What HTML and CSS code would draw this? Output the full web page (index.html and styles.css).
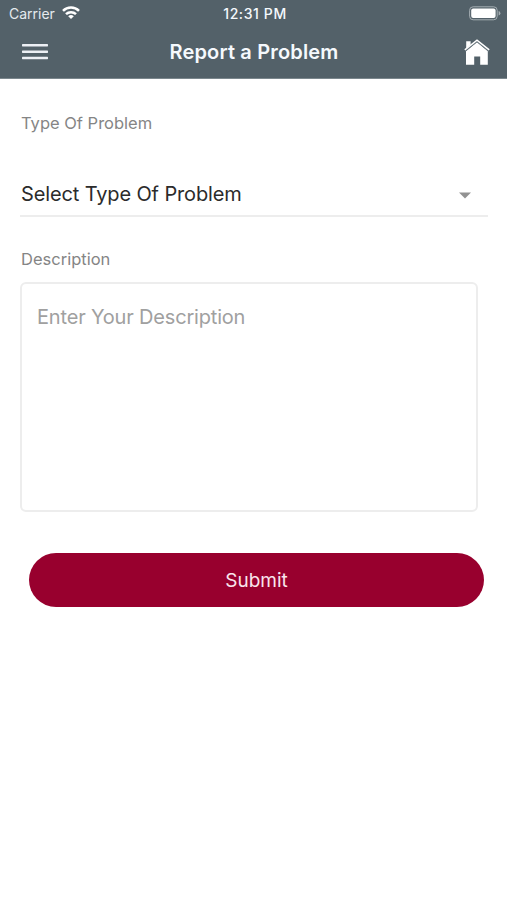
FILE: index.html
```html
<!DOCTYPE html>
<html lang="en">
<head>
<meta charset="utf-8">
<title>Report a Problem</title>
<link rel="stylesheet" href="styles.css">
</head>
<body>
<header class="header">
  <div class="status">
    <div class="carrier"><span class="carrier-name">Carrier</span>
      <svg class="wifi" width="18" height="13" viewBox="0 0 18 13" fill="none" stroke="#fff" stroke-width="2.5"><path d="M1 4.8a11.3 11.3 0 0 1 16 0M4 8.2a7.1 7.1 0 0 1 10 0"/><path d="M9 13 6.2 10.3a4 4 0 0 1 5.6 0Z" fill="#fff" stroke="none"/></svg>
    </div>
    <span class="time">12:31 PM</span>
    <svg class="battery" width="32" height="15" viewBox="0 0 32 15"><rect x=".6" y=".8" width="27.6" height="13" rx="3.5" fill="none" stroke="#a4adb2"/><rect x="2.2" y="2.6" width="24.4" height="9.5" rx="2" fill="#fff"/><path d="M29.6 5v4.5q1.8-.6 1.8-2.25T29.6 5Z" fill="#a4adb2"/></svg>
  </div>
  <div class="navbar">
    <button class="icon-button" aria-label="Menu"><svg width="26" height="18" viewBox="0 0 26 18" fill="#edf0f5"><rect y="1" width="26" height="2.4" rx=".6"/><rect y="7.5" width="26" height="2.4" rx=".6"/><rect y="13.8" width="26" height="2.4" rx=".6"/></svg></button>
    <h1 class="title">Report a Problem</h1>
    <button class="icon-button home" aria-label="Home"><svg width="26" height="27" viewBox="0 0 26 27" fill="#fff"><path d="M2.2 9.5V2.2h4.4v3.6Z"/><path d="M13 3.2 23.8 12.2V25.8h-7.6v-8.3H10.2v8.3H2V12.2Z"/><path d="M1.2 12.2 13 2.7l11.8 9.5" fill="none" stroke="#6d7a81" stroke-width=".9"/><path d="M.8 10.9 13 1.1l12.2 9.8" fill="none" stroke="#fff" stroke-width="1.5"/></svg></button>
  </div>
</header>
<main class="form">
  <div class="label type-label">Type Of Problem</div>
  <div class="select"><span class="select-value">Select Type Of Problem</span><svg class="caret" width="12" height="7" viewBox="0 0 12 7"><path d="M0 .5h12L6 6.5Z" fill="#929292"/></svg></div>
  <label class="label description-label" for="description">Description</label>
  <textarea class="description" id="description" placeholder="Enter Your Description"></textarea>
  <button class="submit">Submit</button>
</main>
</body>
</html>
```
FILE: styles.css
```css
* { box-sizing: border-box; }
body {
  margin: 0;
  min-height: 900px;
  background: #fff;
  font-family: Inter, "Liberation Sans", sans-serif;
}
button { border: 0; padding: 0; background: none; font-family: inherit; }
svg { display: block; }
.header {
  height: 79px;
  background: #536169;
  border-bottom: 1px solid #7b878d;
  color: #f5f9fd;
}
.status {
  display: grid;
  grid-template-columns: 1fr auto 1fr;
  align-items: center;
  height: 27px;
  padding: 0 6px 0 9px;
  font-size: 14px;
}
.carrier { display: flex; align-items: center; gap: 7px; color: #e5eaee; }
.wifi { margin-top: -2px; }
.time { font-size: 14px; font-weight: 500; letter-spacing: 0.6px; }
.battery { justify-self: end; margin-top: -1px; }
.navbar {
  display: grid;
  grid-template-columns: 1fr auto 1fr;
  align-items: center;
  height: 50px;
  padding: 0 17px 0 22px;
}
.home { justify-self: end; }
.icon-button { width: 26px; }
.title {
  margin: 0 4px 0 0;
  font-size: 20px;
  line-height: 26px;
  font-weight: 600;
  letter-spacing: 0.17px;
}
.form { display: flex; flex-direction: column; padding: 33px 19px 0 20px; }
.label { padding-left: 1px; font-size: 16.5px; line-height: 22px; color: #858585; }
.select {
  display: flex;
  align-items: center;
  justify-content: space-between;
  height: 46px;
  margin-top: 37px;
  padding: 1px 17px 0 1px;
  border-bottom: 2px solid #ededed;
  font-size: 20px;
  letter-spacing: -0.13px;
  color: #2b2b2b;
}
.caret { margin-top: 4px; }
.description-label { margin-top: 31px; }
.description {
  width: 458px;
  height: 230px;
  margin: 12px 0 0;
  padding: 20px 15px;
  border: 2px solid #ededed;
  border-radius: 6px;
  outline: 0;
  resize: none;
  font: 20px/26px Inter, "Liberation Sans", sans-serif;
  letter-spacing: -0.18px;
}
.description::placeholder { color: #a0a0a0; }
.submit {
  width: 455px;
  height: 54px;
  margin: 41px 0 0 9px;
  border-radius: 27px;
  background: #98002e;
  color: #f9e5ec;
  font-size: 19px;
}
```
